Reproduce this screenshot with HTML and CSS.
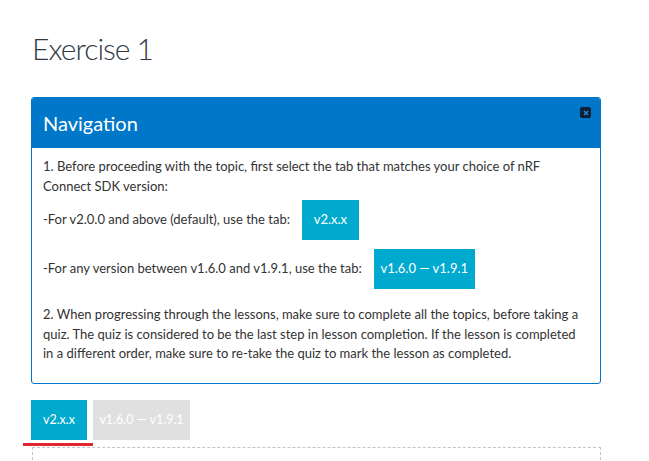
FILE: index.html
```html
<!DOCTYPE html>
<html lang="en">
<head>
<meta charset="utf-8">
<title>Exercise 1</title>
<link rel="stylesheet" href="styles.css">
</head>
<body>
<main class="page">
  <h1 class="title">Exercise 1</h1>
  <section class="nav-box">
    <header class="nav-head">
      <h2 class="nav-title">Navigation</h2>
      <button class="close" aria-label="Close">
        <svg width="6" height="6" viewBox="0 0 6 6"><path d="M1 1L5 5M5 1L1 5" stroke="#2a8fe0" stroke-width="1.3"/></svg>
      </button>
    </header>
    <div class="nav-body">
      <p class="para">1. Before proceeding with the topic, first select the tab that matches your choice of nRF Connect SDK version:</p>
      <p class="row row-first">-For v2.0.0 and above (default), use the tab: <span class="chip chip-a">v2.x.x</span></p>
      <p class="row row-second">-For any version between v1.6.0 and v1.9.1, use the tab: <span class="chip chip-b">v1.6.0 — v1.9.1</span></p>
      <p class="para para-last">2. When progressing through the lessons, make sure to complete all the topics, before taking a quiz. The quiz is considered to be the last step in lesson completion. If the lesson is completed in a different order, make sure to re-take the quiz to mark the lesson as completed.</p>
    </div>
  </section>
  <div class="tabs">
    <button class="tab tab-active">v2.x.x</button>
    <button class="tab tab-idle">v1.6.0 — v1.9.1</button>
    <span class="tab-mark"></span>
  </div>
  <div class="tab-panel"></div>
</main>
</body>
</html>
```
FILE: styles.css
```css
html, body {
  margin: 0;
  padding: 0;
  background: #ffffff;
}
body {
  font-family: Lato, "Open Sans", sans-serif;
  color: #333333;
  overflow: hidden;
}
.page {
  padding: 30px 48px 0 31px;
  width: 570px;
}
.title {
  margin: 0 0 0 1px;
  font-weight: 300;
  font-size: 30px;
  letter-spacing: -1px;
  line-height: 36px;
  color: #2f3a44;
}
.nav-box {
  margin-top: 31px;
  border: 1px solid #0077c8;
  border-radius: 3px;
  overflow: hidden;
}
.nav-head {
  background: #0077c8;
  height: 50px;
  display: flex;
  align-items: flex-start;
  justify-content: space-between;
  padding: 0 9px 0 11px;
}
.nav-title {
  margin: 12px 0 0 0;
  font-size: 20px;
  line-height: 26px;
  font-weight: 400;
  color: #ffffff;
}
.close {
  margin-top: 9px;
  width: 11px;
  height: 11px;
  border: none;
  border-radius: 2px;
  background: #0b2136;
  padding: 0;
  display: flex;
  align-items: center;
  justify-content: center;
}
.nav-body {
  padding: 9px 11px 19px 11px;
  font-size: 13px;
  line-height: 19.5px;
}
.para {
  margin: 0;
}
.row {
  margin: 0;
  display: flex;
  align-items: center;
}
.row-first {
  margin-top: 4px;
}
.row-second {
  margin-top: 9px;
}
.para-last {
  margin-top: 16px;
}
.chip {
  display: inline-flex;
  align-items: center;
  justify-content: center;
  height: 40px;
  background: #00a9ce;
  color: #ffffff;
  margin-left: 12px;
}
.chip-a {
  width: 57px;
}
.chip-b {
  width: 101px;
}
.tabs {
  position: relative;
  margin-top: 16px;
  display: flex;
  gap: 6px;
  height: 40px;
}
.tab {
  border: none;
  height: 40px;
  font-family: inherit;
  font-size: 12.5px;
  color: #ffffff;
  padding: 0;
}
.tab-active {
  width: 56px;
  background: #00a9ce;
}
.tab-idle {
  width: 97px;
  background: #e0e0e0;
}
.tab-mark {
  position: absolute;
  left: -8px;
  top: 43px;
  width: 70px;
  height: 3px;
  background: #e3262d;
}
.tab-panel {
  margin-top: 7px;
  margin-left: 1px;
  height: 12px;
  border: 1px dashed #c4c4c4;
  border-bottom: none;
}
```
